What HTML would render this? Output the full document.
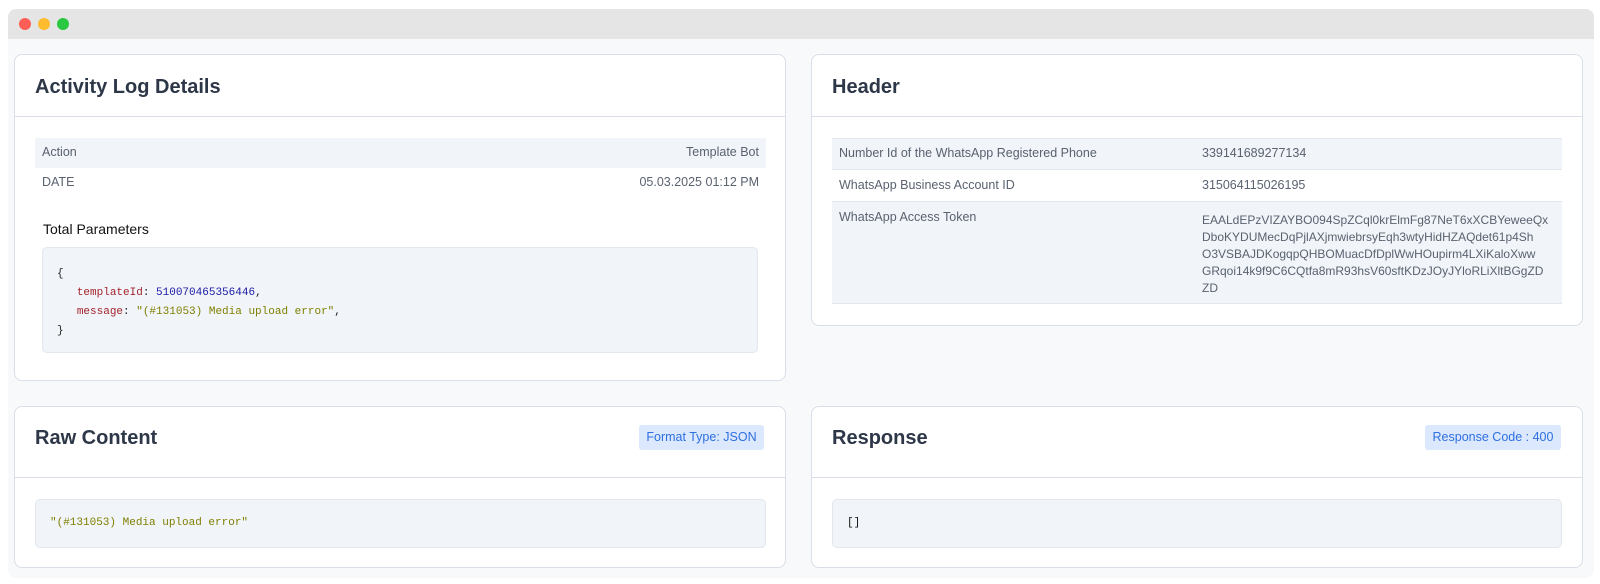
<!DOCTYPE html>
<html><head><meta charset="utf-8"><style>
*{box-sizing:border-box;margin:0;padding:0}
body{width:1600px;height:584px;background:#fff;font-family:"Liberation Sans",sans-serif;position:relative;overflow:hidden}
.frame{position:absolute;left:8px;top:9px;width:1586px;height:569px;background:#f8f9fb;border-radius:8px;overflow:hidden}
.bar{position:absolute;left:0;top:0;right:0;height:30px;background:#e5e5e5}
.dot{position:absolute;top:9px;width:12px;height:12px;border-radius:50%}
.card{position:absolute;background:#fff;border:1px solid #d9dee8;border-radius:8px}
.title{position:absolute;left:20px;font-size:20px;font-weight:bold;color:#2d3748}
.div{position:absolute;left:0;right:0;height:1px;background:#d9dee8}
.row{position:absolute;font-size:12.5px;color:#5a6270}
.code{position:absolute;background:#f1f4f8;border:1px solid #e2e7ee;border-radius:5px;font-family:"Liberation Mono",monospace;font-size:11px}
.badge{position:absolute;background:#dbe8fd;color:#2f6fe0;font-size:12.5px;border-radius:3px;text-align:center;line-height:25px}
</style></head><body>
<div class="frame">
<div class="bar"></div>
<div class="dot" style="left:11px;background:#fd5f57"></div>
<div class="dot" style="left:30px;background:#febc2e"></div>
<div class="dot" style="left:49px;background:#28c840"></div>
</div>

<div class="card" style="left:14px;top:54px;width:772px;height:327px">
 <div class="title" style="top:21px">Activity Log Details</div>
 <div class="div" style="top:61px"></div>
 <div class="row" style="left:20px;top:83px;width:731px;height:30px;background:#f1f4f8"></div>
 <div class="row" style="left:27px;top:90px">Action</div>
 <div class="row" style="right:26px;top:90px">Template Bot</div>
 <div class="row" style="left:27px;top:120px">DATE</div>
 <div class="row" style="right:26px;top:120px">05.03.2025 01:12 PM</div>
 <div class="row" style="left:28px;top:166px;font-size:14px;color:#111">Total Parameters</div>
 <div class="code" style="left:27px;top:192px;width:716px;height:106px;padding:17px 0 0 14px;line-height:19px;color:#222">
 {<br>&nbsp;&nbsp;&nbsp;<span style="color:#a3232b">templateId</span>: <span style="color:#1a1aa6">510070465356446</span>,<br>&nbsp;&nbsp;&nbsp;<span style="color:#a3232b">message</span>: <span style="color:#7f7f00">"(#131053) Media upload error"</span>,<br>}
 </div>
</div>

<div class="card" style="left:811px;top:54px;width:772px;height:272px">
 <div class="title" style="top:21px">Header</div>
 <div class="div" style="top:61px"></div>
 <div style="position:absolute;left:20px;top:83px;width:730px;height:32px;background:#f1f4f8;border-top:1px solid #e2e7ee;border-bottom:1px solid #e2e7ee"></div>
 <div style="position:absolute;left:20px;top:146px;width:730px;height:103px;background:#f1f4f8;border-top:1px solid #e2e7ee;border-bottom:1px solid #e2e7ee"></div>
 <div class="row" style="left:27px;top:91px">Number Id of the WhatsApp Registered Phone</div>
 <div class="row" style="left:390px;top:91px">339141689277134</div>
 <div class="row" style="left:27px;top:123px">WhatsApp Business Account ID</div>
 <div class="row" style="left:390px;top:123px">315064115026195</div>
 <div class="row" style="left:27px;top:155px">WhatsApp Access Token</div>
 <div class="row" style="left:390px;top:157px;line-height:17px;font-size:12px">EAALdEPzVIZAYBO094SpZCql0krElmFg87NeT6xXCBYeweeQx<br>DboKYDUMecDqPjlAXjmwiebrsyEqh3wtyHidHZAQdet61p4Sh<br>O3VSBAJDKogqpQHBOMuacDfDplWwHOupirm4LXiKaloXww<br>GRqoi14k9f9C6CQtfa8mR93hsV60sftKDzJOyJYloRLiXltBGgZD<br>ZD</div>
</div>

<div class="card" style="left:14px;top:406px;width:772px;height:162px">
 <div class="title" style="top:20px">Raw Content</div>
 <div class="badge" style="left:624px;top:18px;width:125px">Format Type: JSON</div>
 <div class="div" style="top:70px"></div>
 <div class="code" style="left:20px;top:92px;width:731px;height:49px;padding:17px 0 0 14px;color:#7f7f00">"(#131053) Media upload error"</div>
</div>

<div class="card" style="left:811px;top:406px;width:772px;height:162px">
 <div class="title" style="top:20px">Response</div>
 <div class="badge" style="left:613px;top:18px;width:136px">Response Code : 400</div>
 <div class="div" style="top:70px"></div>
 <div class="code" style="left:20px;top:92px;width:730px;height:49px;padding:17px 0 0 14px;color:#111">[]</div>
</div>
</body></html>
